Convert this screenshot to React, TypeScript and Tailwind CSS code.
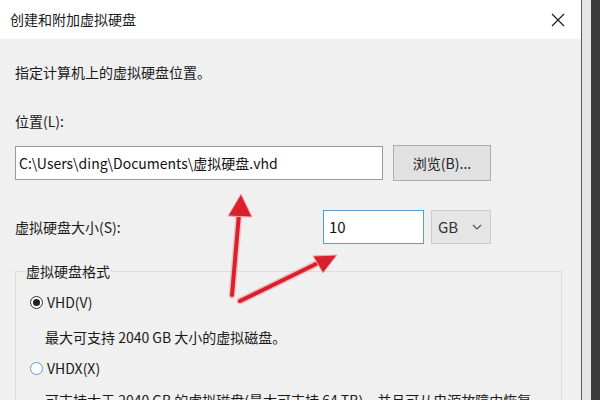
import React from 'react'

const font = { fontFamily: '"Noto Sans CJK SC", "Noto Sans", sans-serif' }

function Arrows() {
  return (
    <svg className="absolute inset-0 pointer-events-none" width="600" height="400" viewBox="0 0 600 400">
      <g stroke="#f4a3a8" strokeWidth="7" strokeLinecap="round" fill="none" opacity="0.6">
        <line x1="232" y1="295" x2="239" y2="214" />
        <line x1="240" y1="301" x2="316" y2="264" />
      </g>
      <g stroke="#d8212c" strokeWidth="4" strokeLinecap="round" fill="none">
        <line x1="232" y1="295" x2="239" y2="214" />
        <line x1="240" y1="301" x2="316" y2="264" />
      </g>
      <polygon points="241,194 228,216 252,217" fill="#d8212c" stroke="#f4a3a8" strokeWidth="1" />
      <polygon points="337,255 313,256 323,273" fill="#d8212c" stroke="#f4a3a8" strokeWidth="1" />
    </svg>
  )
}

export default function App() {
  return (
    <div className="relative w-[600px] h-[400px] overflow-hidden flex bg-[#3a3a3a]" style={font}>
      {/* dialog */}
      <div className="w-[582px] h-full flex flex-col bg-[#f0f0f0] border-r border-[#5a5a5a]">
        {/* title bar */}
        <div className="h-[39px] shrink-0 bg-white flex items-center justify-between pl-[10px] pr-[16px]">
          <span className="text-[14px] text-[#1a1a1a]">创建和附加虚拟硬盘</span>
          <svg width="14" height="14" viewBox="0 0 14 14" className="text-[#222]">
            <path d="M1 1 L13 13 M13 1 L1 13" stroke="currentColor" strokeWidth="1.3" />
          </svg>
        </div>

        <div className="flex flex-col px-[15px] pt-[24px] text-[#1a1a1a]">
          <p className="text-[14px] leading-[18px]">指定计算机上的虚拟硬盘位置。</p>

          <p className="mt-[31px] text-[14px] leading-[18px]">位置(L):</p>

          <div className="mt-[15px] flex items-center gap-[10px]">
            <div className="w-[368px] h-[34px] bg-white border border-[#9a9a9a] flex items-center pl-[3px] text-[14px] text-[#111]">
              C:\Users\ding\Documents\虚拟硬盘.vhd
            </div>
            <div className="w-[98px] h-[36px] bg-[#e1e1e1] border border-[#adadad] flex items-center justify-center text-[14px] text-[#222]">
              浏览(B)...
            </div>
          </div>

          <div className="mt-[29px] flex items-center">
            <span className="text-[14px] flex-1">虚拟硬盘大小(S):</span>
            <div className="w-[101px] h-[34px] bg-white border border-[#5a9bd5] flex items-center pl-[5px] text-[15px] text-[#111]">
              10
            </div>
            <div className="ml-[7px] mr-[75px] w-[60px] h-[34px] bg-[#e5e5e5] border border-[#cccccc] flex items-center justify-between pl-[6px] pr-[8px] text-[15px] text-[#333]">
              GB
              <svg width="10" height="6" viewBox="0 0 10 6">
                <path d="M1 1 L5 5 L9 1" stroke="#555" strokeWidth="1.2" fill="none" />
              </svg>
            </div>
          </div>

          {/* group box */}
          <div className="relative mt-[27px] mr-[4px] border border-[#dcdcdc] h-[160px] pl-[14px] pt-[18px]">
            <span className="absolute -top-[11px] left-[9px] bg-[#f0f0f0] px-[1px] text-[14px] leading-[20px]">虚拟硬盘格式</span>
            <div className="flex items-center gap-[4px] h-[24px]">
              <span className="w-[13px] h-[13px] rounded-full border border-[#333] flex items-center justify-center bg-white">
                <span className="w-[7px] h-[7px] rounded-full bg-[#222]" />
              </span>
              <span className="text-[14px]">VHD(V)</span>
            </div>
            <p className="mt-[13px] pl-[15px] text-[14px] leading-[20px]">最大可支持 2040 GB 大小的虚拟磁盘。</p>
            <div className="mt-[9px] flex items-center gap-[4px] h-[24px]">
              <span className="w-[13px] h-[13px] rounded-full border border-[#5a9bd5] bg-white" />
              <span className="text-[14px]">VHDX(X)</span>
            </div>
            <p className="mt-[10px] pl-[15px] text-[14px] leading-[20px] whitespace-nowrap">
              可支持大于 2040 GB 的虚拟磁盘(最大可支持 64 TB)，并且可从电源故障中恢复。
            </p>
          </div>
        </div>
      </div>
      <div className="w-[9px] h-full bg-[#e6e6e6]" />
      <div className="flex-1 h-full bg-[#3c3c3c]" />
      <Arrows />
    </div>
  )
}
